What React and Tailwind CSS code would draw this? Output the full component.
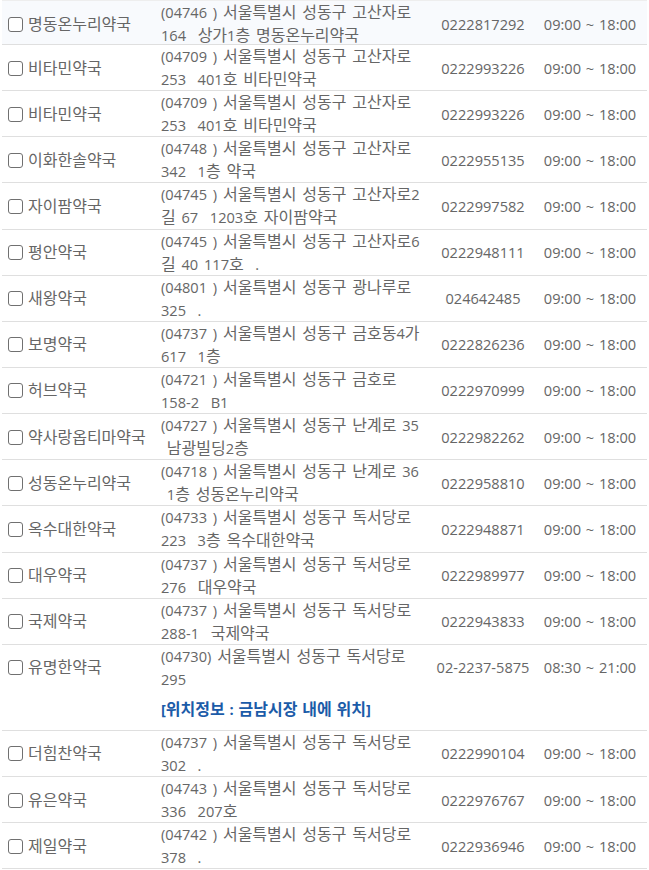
import React from "react";

const rows = [
  ["명동온누리약국", "(04746 ) 서울특별시 성동구 고산자로", "164  상가1층 명동온누리약국", "0222817292", "09:00 ~ 18:00"],
  ["비타민약국", "(04709 ) 서울특별시 성동구 고산자로", "253  401호 비타민약국", "0222993226", "09:00 ~ 18:00"],
  ["비타민약국", "(04709 ) 서울특별시 성동구 고산자로", "253  401호 비타민약국", "0222993226", "09:00 ~ 18:00"],
  ["이화한솔약국", "(04748 ) 서울특별시 성동구 고산자로", "342  1층 약국", "0222955135", "09:00 ~ 18:00"],
  ["자이팜약국", "(04745 ) 서울특별시 성동구 고산자로2", "길 67  1203호 자이팜약국", "0222997582", "09:00 ~ 18:00"],
  ["평안약국", "(04745 ) 서울특별시 성동구 고산자로6", "길 40 117호  .", "0222948111", "09:00 ~ 18:00"],
  ["새왕약국", "(04801 ) 서울특별시 성동구 광나루로", "325  .", "024642485", "09:00 ~ 18:00"],
  ["보명약국", "(04737 ) 서울특별시 성동구 금호동4가", "617  1층", "0222826236", "09:00 ~ 18:00"],
  ["허브약국", "(04721 ) 서울특별시 성동구 금호로", "158-2  B1", "0222970999", "09:00 ~ 18:00"],
  ["약사랑옵티마약국", "(04727 ) 서울특별시 성동구 난계로 35", " 남광빌딩2층", "0222982262", "09:00 ~ 18:00"],
  ["성동온누리약국", "(04718 ) 서울특별시 성동구 난계로 36", " 1층 성동온누리약국", "0222958810", "09:00 ~ 18:00"],
  ["옥수대한약국", "(04733 ) 서울특별시 성동구 독서당로", "223  3층 옥수대한약국", "0222948871", "09:00 ~ 18:00"],
  ["대우약국", "(04737 ) 서울특별시 성동구 독서당로", "276  대우약국", "0222989977", "09:00 ~ 18:00"],
  ["국제약국", "(04737 ) 서울특별시 성동구 독서당로", "288-1  국제약국", "0222943833", "09:00 ~ 18:00"],
  ["유명한약국", "(04730) 서울특별시 성동구 독서당로", "295", "02-2237-5875", "08:30 ~ 21:00", "[위치정보 : 금남시장 내에 위치]"],
  ["더힘찬약국", "(04737 ) 서울특별시 성동구 독서당로", "302  .", "0222990104", "09:00 ~ 18:00"],
  ["유은약국", "(04743 ) 서울특별시 성동구 독서당로", "336  207호", "0222976767", "09:00 ~ 18:00"],
  ["제일약국", "(04742 ) 서울특별시 성동구 독서당로", "378  .", "0222936946", "09:00 ~ 18:00"],
];

function T({ s }) {
  const parts = s.split(/([\uAC00-\uD7A3]+)/);
  return parts.map((p, i) =>
    /[\uAC00-\uD7A3]/.test(p) ? (
      <span key={i} className="text-[16px]">{p}</span>
    ) : (
      <span key={i}>{p}</span>
    )
  );
}

function Row({ r, first }) {
  const [name, a1, a2, phone, hours, note] = r;
  return (
    <div className={`border-b border-[#dfdfdf] ${first ? "bg-[#f8fafd]" : ""}`}>
      <div
        className={`grid grid-cols-[153px_275px_106px_108px] items-center ${first ? "h-[43px]" : "h-[45.15px]"}`}
      >
        <div className="flex items-center pl-[6px]">
          <span className="w-[15px] h-[15px] rounded-[3px] border-[1.5px] border-[#707070] bg-white shrink-0" />
          <span className="ml-[5px] whitespace-nowrap h-[23px]"><T s={name} /></span>
        </div>
        <div className="pl-[6px] whitespace-pre [word-spacing:2px]">
          <div className="h-[23px]"><T s={a1} /></div>
          <div className="h-[23px]"><T s={a2} /></div>
        </div>
        <div className="text-center whitespace-nowrap h-[23px]">{phone}</div>
        <div className="text-center whitespace-nowrap h-[23px] [word-spacing:1px]">{hours}</div>
      </div>
      {note && (
        <div className="grid grid-cols-[153px_275px_106px_108px] h-[40px] items-center">
          <div />
          <div className="pl-[6px] font-bold text-[#1b5ba8] whitespace-nowrap h-[23px] [word-spacing:1px]"><T s={note} /></div>
        </div>
      )}
    </div>
  );
}

export default function App() {
  return (
    <div
      className="w-[649px] h-[870px] overflow-hidden bg-white text-[14.6px] leading-[23px] text-[#666]"
      style={{ fontFamily: '"Open Sans", "Noto Sans CJK KR", sans-serif' }}
    >
      <div className="mx-[2px] border-t border-[#eeeeee]">
        {rows.map((r, i) => (
          <Row key={i} r={r} first={i === 0} />
        ))}
      </div>
    </div>
  );
}
